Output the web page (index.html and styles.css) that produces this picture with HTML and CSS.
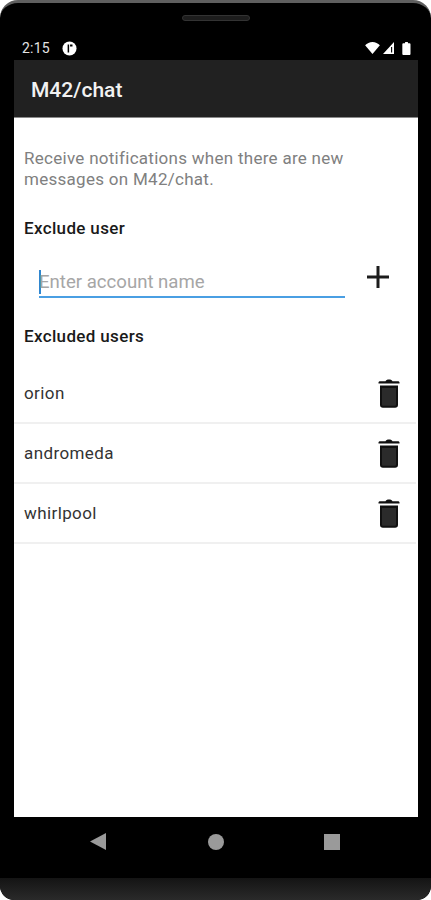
FILE: index.html
```html
<!DOCTYPE html>
<html lang="en">

<head>
    <meta charset="UTF-8">
    <meta name="viewport" content="width=device-width, initial-scale=1.0">
    <title>M42/chat - Notifications</title>
    <link rel="stylesheet" href="styles.css">
</head>

<body>
    <div class="phone">
        <div class="bezel_top">
            <div class="speaker"></div>
        </div>

        <div class="status_bar">
            <div class="status_left">
                <span class="clock">2:15</span>
                <svg class="status_app" width="15" height="15" viewBox="0 0 16 16">
                    <circle cx="8" cy="8" r="7.500" fill="#fff" />
                    <path d="M6 3.800h1.600v8.400H6zM8.600 3.800h2.600v2H8.600z" fill="#000" />
                </svg>
            </div>
            <div class="status_right">
                <svg width="15" height="12" viewBox="0 0 16 13">
                    <path d="M0 3.600C2 1.400 4.900 0 8 0s6 1.400 8 3.600L8 13z" fill="#fff" />
                </svg>
                <svg width="11" height="12" viewBox="0 0 12 13">
                    <path d="M12 0v13H0zM10 5.500H8.800v6H10z" fill="#fff" fill-rule="evenodd" />
                </svg>
                <svg class="battery" width="9" height="13" viewBox="0 0 9 14">
                    <path d="M3 0h3v1.400h1.800c.6 0 1 .4 1 1V13c0 .6-.4 1-1 1H1c-.6 0-1-.4-1-1V2.400c0-.6.4-1 1-1h2z" fill="#fff" />
                </svg>
            </div>
        </div>

        <header class="app_bar">
            <h1 class="app_title">M42/chat</h1>
        </header>

        <main class="screen">
            <p class="intro">Receive notifications when there are new messages on M42/chat.</p>

            <h2 class="section_title">Exclude user</h2>
            <div class="add_row">
                <div class="input_wrap">
                    <span class="caret"></span>
                    <input class="account_input" type="text" placeholder="Enter account name">
                </div>
                <button class="icon_btn add_btn" type="button" aria-label="Add">
                    <svg width="24" height="24" viewBox="0 0 24 24">
                        <path d="M10.500 1h3v9.500H23v3h-9.500V23h-3v-9.500H1v-3h9.500z" fill="#1c1c1c" />
                    </svg>
                </button>
            </div>

            <h2 class="section_title excluded_title">Excluded users</h2>
            <ul class="user_list">
                <li class="user_row">
                    <span>orion</span>
                    <button class="icon_btn" type="button" aria-label="Delete orion">
                        <svg width="22" height="29" viewBox="0 0 22 29">
                            <path d="M7.500 2.300C8 .9 9.200.4 11 .4s3 .5 3.500 1.900H20c.8 0 1.500.6 1.500 1.300v.9H.5v-.9c0-.7.7-1.300 1.500-1.300z" fill="#111" />
                            <path d="M2 6.500h18V26c0 1.700-1.200 2.800-2.800 2.800H4.800C3.200 28.800 2 27.700 2 26z" fill="#111" />
                            <path d="M4 9h14v16.500c0 .8-.5 1.300-1.300 1.300H5.300c-.8 0-1.300-.5-1.300-1.300z" fill="#2b2b2b" />
                        </svg>
                    </button>
                </li>
                <li class="user_row">
                    <span>andromeda</span>
                    <button class="icon_btn" type="button" aria-label="Delete andromeda">
                        <svg width="22" height="29" viewBox="0 0 22 29">
                            <path d="M7.500 2.300C8 .9 9.200.4 11 .4s3 .5 3.500 1.900H20c.8 0 1.500.6 1.500 1.300v.9H.5v-.9c0-.7.7-1.300 1.500-1.300z" fill="#111" />
                            <path d="M2 6.500h18V26c0 1.700-1.200 2.800-2.800 2.800H4.800C3.200 28.800 2 27.700 2 26z" fill="#111" />
                            <path d="M4 9h14v16.500c0 .8-.5 1.300-1.300 1.300H5.300c-.8 0-1.300-.5-1.300-1.300z" fill="#2b2b2b" />
                        </svg>
                    </button>
                </li>
                <li class="user_row">
                    <span>whirlpool</span>
                    <button class="icon_btn" type="button" aria-label="Delete whirlpool">
                        <svg width="22" height="29" viewBox="0 0 22 29">
                            <path d="M7.500 2.300C8 .9 9.200.4 11 .4s3 .5 3.500 1.900H20c.8 0 1.500.6 1.500 1.300v.9H.5v-.9c0-.7.7-1.300 1.500-1.300z" fill="#111" />
                            <path d="M2 6.500h18V26c0 1.700-1.200 2.800-2.800 2.800H4.800C3.200 28.800 2 27.700 2 26z" fill="#111" />
                            <path d="M4 9h14v16.500c0 .8-.5 1.300-1.300 1.300H5.300c-.8 0-1.300-.5-1.300-1.300z" fill="#2b2b2b" />
                        </svg>
                    </button>
                </li>
            </ul>
        </main>

        <nav class="nav_bar">
            <svg width="16" height="17" viewBox="0 0 16 17">
                <path d="M16 0v17L0 8.500z" fill="#9a9a9a" />
            </svg>
            <svg class="nav_home" width="16" height="16" viewBox="0 0 16 16">
                <circle cx="8" cy="8" r="8" fill="#9a9a9a" />
            </svg>
            <svg width="16" height="16" viewBox="0 0 16 16">
                <rect width="16" height="16" fill="#9a9a9a" />
            </svg>
        </nav>

        <div class="chin"></div>
    </div>
</body>

</html>
```

FILE: styles.css
```css
/* Reset some default browser styles */
body,
html {
    margin: 0;
    padding: 0;
    font-family: 'Roboto', sans-serif;
    background-color: #ffffff;
    height: 100%;
    overflow: hidden;
}

.phone {
    width: 431px;
    height: 900px;
    display: flex;
    flex-direction: column;
    background: #000000;
    border-top: 3px solid #5f5f5f;
    border-radius: 18px 18px 14px 14px;
    box-sizing: border-box;
    overflow: hidden;
}

.bezel_top {
    height: 33px;
    flex: none;
    display: flex;
    justify-content: center;
}

.speaker {
    width: 68px;
    height: 6px;
    margin-top: 12px;
    background: #1d1d1d;
    border: 1px solid #333333;
    border-radius: 4px;
    box-sizing: border-box;
}

.status_bar {
    height: 24px;
    flex: none;
    display: flex;
    justify-content: space-between;
    align-items: center;
    padding: 0 20px 0 22px;
}

.status_left,
.status_right {
    display: flex;
    align-items: center;
}

.clock {
    color: #e4e4e4;
    font-size: 14px;
    letter-spacing: 0.2px;
}

.status_app {
    margin-left: 12px;
}

.status_right {
    gap: 3px;
}

.battery {
    margin-left: 5px;
}

.app_bar {
    height: 57px;
    flex: none;
    margin: 0 13px 0 14px;
    padding: 2px 17px 0;
    background: #212121;
    display: flex;
    align-items: center;
    box-sizing: border-box;
}

.app_title {
    margin: 0;
    color: #f2f2f2;
    font-size: 21px;
    font-weight: 500;
}

.screen {
    flex: 1;
    margin: 0 13px 0 14px;
    padding: 30px 0 0;
    background: #ffffff;
    border-top: 1px solid #8a8a8a;
    overflow: hidden;
}

.intro {
    margin: 0 10px;
    font-size: 17px;
    line-height: 21px;
    letter-spacing: 0.28px;
    color: #808080;
}

.section_title {
    margin: 28px 10px 0;
    font-size: 17px;
    line-height: 21px;
    font-weight: 500;
    letter-spacing: 0.35px;
    color: #1a1a1a;
}

.add_row {
    display: flex;
    align-items: flex-start;
    margin-top: 21px;
    padding-left: 25px;
}

.input_wrap {
    width: 306px;
    height: 38px;
    padding-top: 8px;
    display: flex;
    align-items: center;
    border-bottom: 2px solid #4a9fe3;
    box-sizing: border-box;
}

.caret {
    width: 2px;
    height: 24px;
    background: #2f86d0;
    flex: none;
}

.account_input {
    flex: 1;
    min-width: 0;
    padding: 0;
    margin-left: -2px;
    border: none;
    outline: none;
    background: transparent;
    font-family: inherit;
    font-size: 18.6px;
    color: #1a1a1a;
}

.account_input::placeholder {
    color: #a6a6a6;
    opacity: 1;
}

.icon_btn {
    padding: 0;
    border: none;
    background: none;
    display: flex;
    cursor: pointer;
}

.add_btn {
    margin: 5px 0 0 21px;
}

.excluded_title {
    margin-top: 28px;
}

.user_list {
    list-style: none;
    margin: 17px 2px 0 0;
    padding: 0;
}

.user_row {
    height: 60px;
    display: flex;
    justify-content: space-between;
    align-items: center;
    padding: 0 16px 0 10px;
    border-bottom: 2px solid #f0f0f0;
    box-sizing: border-box;
    font-size: 17px;
    letter-spacing: 0.4px;
    color: #333333;
}

.nav_bar {
    height: 61px;
    flex: none;
    display: flex;
    justify-content: space-between;
    align-items: center;
    padding: 0 91px 12px 90px;
    box-sizing: border-box;
}

.nav_home {
    margin-left: 2px;
}

.chin {
    height: 22px;
    flex: none;
    background: linear-gradient(#141414, #2a2a2a);
    border-radius: 0 0 14px 14px;
}
```
